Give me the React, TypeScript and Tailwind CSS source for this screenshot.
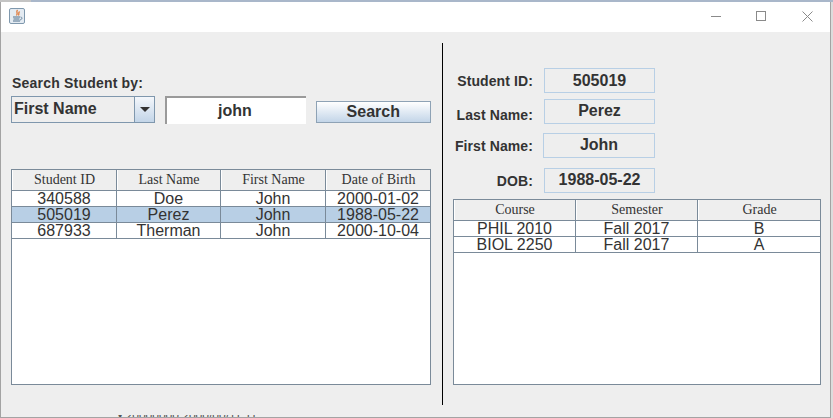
const studentColumns = ["Student ID", "Last Name", "First Name", "Date of Birth"];
const students = [
  ["340588", "Doe", "John", "2000-01-02"],
  ["505019", "Perez", "John", "1988-05-22"],
  ["687933", "Therman", "John", "2000-10-04"],
];
const courseColumns = ["Course", "Semester", "Grade"];
const courses = [
  ["PHIL 2010", "Fall 2017", "B"],
  ["BIOL 2250", "Fall 2017", "A"],
];
const details = [
  { label: "Student ID:", value: "505019", row: "gap-[11px]", box: "w-[111px]", labelExtra: "" },
  { label: "Last Name:", value: "Perez", row: "gap-[11px] mt-[6px]", box: "w-[111px] pb-[2px]", labelExtra: "pt-[6px]" },
  { label: "First Name:", value: "John", row: "gap-[10px] mt-[9px]", box: "w-[112px] pb-[2px]", labelExtra: "" },
  { label: "DOB:", value: "1988-05-22", row: "gap-[11px] mt-[10px]", box: "w-[111px] pb-[2px]", labelExtra: "" },
];

function JavaIcon() {
  return (
    <svg width="16" height="16" viewBox="0 0 16 16" fill="none">
      <rect x="0.5" y="0.5" width="15" height="15" rx="1.5" fill="#e4ebf2" stroke="#7f98ad" />
      <path d="M8.5 2 C6.5 4 9.5 5 7.5 7.5 M10.5 3.5 C9 5 10.5 6 9.5 7.5" stroke="#e0702a" strokeWidth="1.2" />
      <path d="M4 9h7M4.5 11h6M4 13h7" stroke="#50708c" strokeWidth="1" />
      <path d="M11.5 9 C13.5 9 13.5 11.5 11 12" stroke="#50708c" strokeWidth="0.8" />
    </svg>
  );
}

function DataTable({ columns, rows, selected, widths, height }: { columns: string[]; rows: string[][]; selected?: number; widths: string; height: string }) {
  return (
    <div className={`flex flex-col ${height} bg-white border border-[#7a8a99] overflow-hidden`}>
      <div className={`grid ${widths} h-[21px] shrink-0 border-b border-[#7a8a99] bg-[#eeeeee]`}>
        {columns.map((c) => (
          <div key={c} className="flex items-center justify-center border-r last:border-r-0 border-[#7a8a99] border-l border-l-white font-['Liberation_Serif',serif] text-[14px] text-[#333333] leading-none">
            {c}
          </div>
        ))}
      </div>
      {rows.map((row, i) => (
        <div key={i} className={`grid ${widths} h-4 shrink-0 border-b border-[#7a8a99] ${i === selected ? "bg-[#b8cfe5]" : "bg-white"}`}>
          {row.map((cell, j) => (
            <div key={j} className="flex items-center justify-center border-r last:border-r-0 border-[#7a8a99] text-[16px] leading-none text-[#333333]">
              {cell}
            </div>
          ))}
        </div>
      ))}
    </div>
  );
}

export default function App() {
  return (
    <div className="w-[833px] h-[418px] overflow-hidden bg-[#dcdcdc] font-['Liberation_Sans',sans-serif] text-[#333333]">
      <div className="flex h-[2px]">
        <div className="w-[31px] bg-[#c4c4c4]" />
        <div className="flex-1 bg-[#a9b7ca]" />
      </div>
      <div className="w-[831px] h-[416px] border-x border-b border-[#a3a3a3] bg-[#eeeeee] flex flex-col">
        <div className="h-[30px] shrink-0 bg-white flex items-center pl-[8px] pb-[2px]">
          <JavaIcon />
          <div className="ml-auto flex items-center gap-[35px] pr-[17px]">
            <div className="w-[10px] h-px bg-[#8a8a8a]" />
            <div className="w-[10px] h-[10px] border border-[#8a8a8a]" />
            <svg className="ml-px" width="11" height="11" viewBox="0 0 11 11" stroke="#8a8a8a" fill="none">
              <path d="M0.5 0.5 10.5 10.5M10.5 0.5 0.5 10.5" />
            </svg>
          </div>
        </div>
        <div className="flex flex-1 min-h-0">
          <div className="w-[441px] shrink-0 pl-[10px] pr-[11px]">
            <div className="mt-[44px] h-[14px] flex items-center pl-px text-[14px] font-bold tracking-[0.2px] leading-none whitespace-nowrap">
              Search Student by:
            </div>
            <div className="mt-[6px] flex items-start">
              <div className="w-[145px] h-[27px] flex border border-[#7f97ad] bg-[#eeeeee]">
                <div className="flex-1 flex items-center pl-[2px] pb-[2px] text-[16px] font-bold leading-none border-r border-[#7f97ad]">First Name</div>
                <div className="w-[19px] flex items-center justify-center bg-gradient-to-b from-[#f4f7fb] to-[#c3d5e8]">
                  <div className="w-0 h-0 border-x-[5px] border-x-transparent border-t-[5px] border-t-[#333333]" />
                </div>
              </div>
              <div className="ml-[10px] w-[141px] h-[28px] flex items-center justify-center pr-[3px] bg-white border-t-2 border-l-2 border-[#9a9a9a] text-[16px] font-bold leading-none">john</div>
              <div className="ml-[10px] mt-[5px] w-[116px] h-[22px] flex items-center justify-center border border-[#8ea2b5] bg-gradient-to-b from-white to-[#c3d5e8] text-[16px] font-bold leading-none">Search</div>
            </div>
            <div className="mt-[45px]">
              <DataTable columns={studentColumns} rows={students} selected={1} widths="grid-cols-[105px_104px_105px_1fr]" height="h-[216px]" />
            </div>
          </div>
          <div className="w-px h-[362px] mt-[11px] bg-black shrink-0" />
          <div className="flex-1 min-w-0 pl-[10px] pr-[9px]">
            <div className="w-[202px] mt-[36px] flex flex-col">
              {details.map((d) => (
                <div key={d.label} className={`flex items-center justify-end ${d.row}`}>
                  <div className={`text-[14px] font-bold tracking-[0.1px] leading-none whitespace-nowrap ${d.labelExtra}`}>{d.label}</div>
                  <div className={`${d.box} h-[25px] flex items-center justify-center border border-[#b8cfe5] text-[16px] font-bold leading-none`}>{d.value}</div>
                </div>
              ))}
            </div>
            <div className="mt-[6px]">
              <DataTable columns={courseColumns} rows={courses} widths="grid-cols-[122px_122px_1fr]" height="h-[186px]" />
            </div>
          </div>
        </div>
        <div className="h-[2px] shrink-0 overflow-hidden pl-[117px] text-[12px] leading-[2px] text-[#555555] whitespace-nowrap">
          •  20000000 2000/00/11 11
        </div>
      </div>
    </div>
  );
}
